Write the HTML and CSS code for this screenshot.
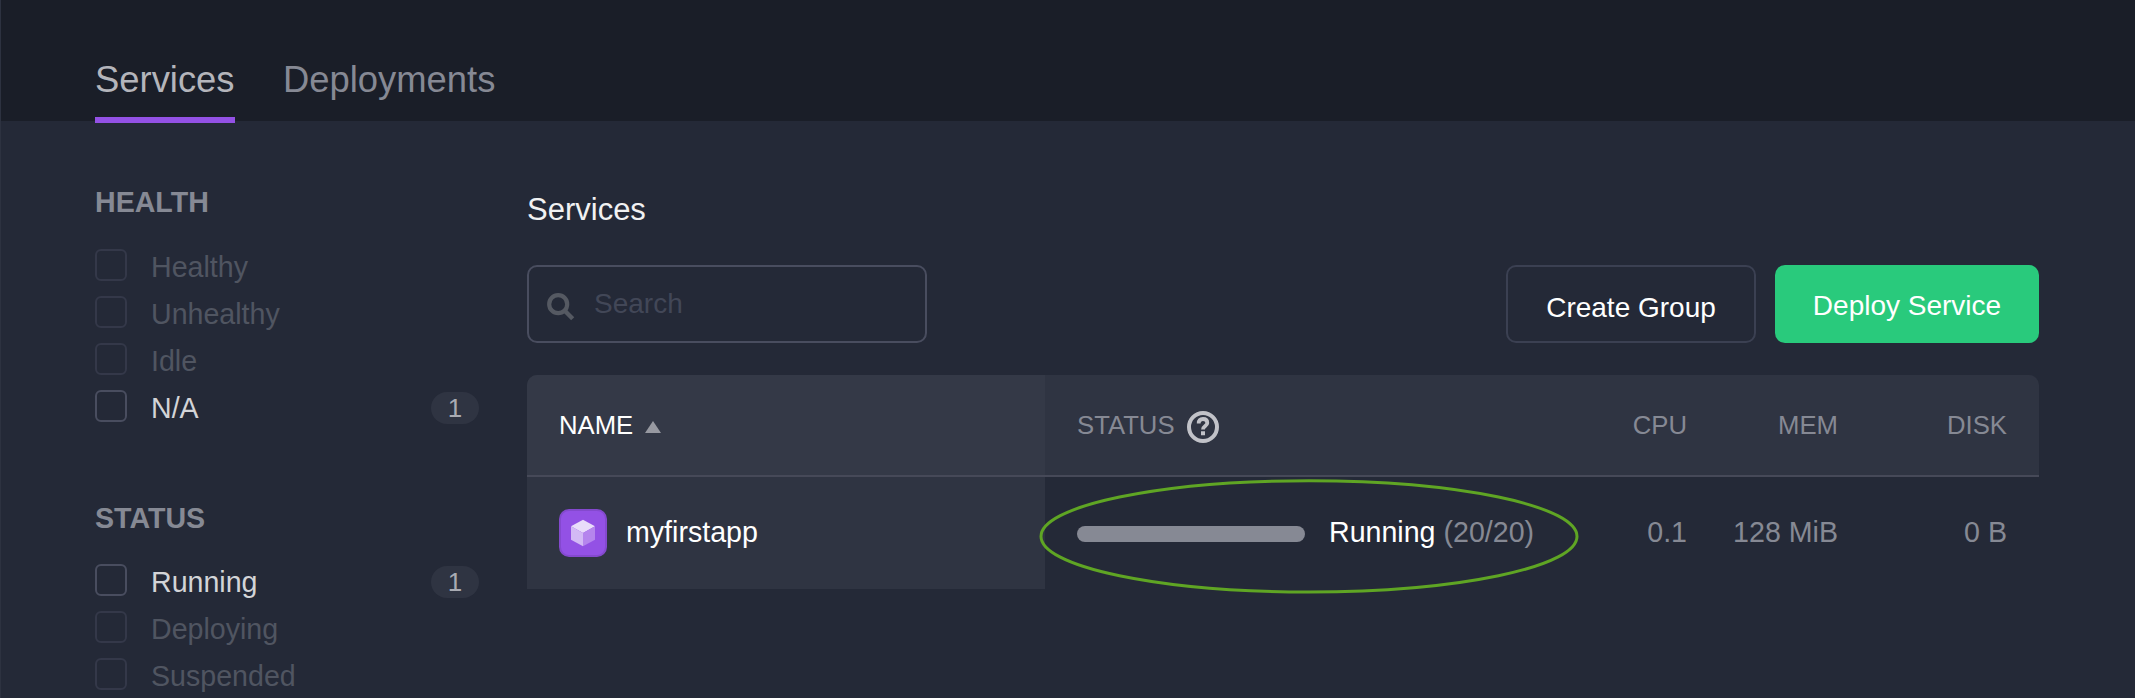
FILE: index.html
```html
<!DOCTYPE html>
<html lang="en">
<head>
<meta charset="utf-8">
<title>Services</title>
<link rel="stylesheet" href="styles.css">
</head>
<body>
<div class="page">
  <header class="topbar">
    <nav class="tabs">
      <a class="tab active">Services</a>
      <a class="tab">Deployments</a>
    </nav>
  </header>
  <div class="content">
    <aside class="sidebar">
      <section class="filter-group">
        <h2 class="filter-title">HEALTH</h2>
        <label class="filter muted"><span class="box"></span><span class="filter-name">Healthy</span></label>
        <label class="filter muted"><span class="box"></span><span class="filter-name">Unhealthy</span></label>
        <label class="filter muted"><span class="box"></span><span class="filter-name">Idle</span></label>
        <label class="filter"><span class="box"></span><span class="filter-name">N/A</span><span class="count">1</span></label>
      </section>
      <section class="filter-group">
        <h2 class="filter-title">STATUS</h2>
        <label class="filter"><span class="box"></span><span class="filter-name">Running</span><span class="count">1</span></label>
        <label class="filter muted"><span class="box"></span><span class="filter-name">Deploying</span></label>
        <label class="filter muted"><span class="box"></span><span class="filter-name">Suspended</span></label>
      </section>
    </aside>
    <main class="main">
      <h1 class="title">Services</h1>
      <div class="toolbar">
        <div class="search">
          <svg class="search-icon" width="28" height="28" viewBox="0 0 28 28"><circle cx="11.2" cy="11.2" r="9" fill="none" stroke="#555962" stroke-width="4.2"/><path d="M17.5 17.5L25.7 25.7" stroke="#555962" stroke-width="4.4"/></svg>
          <span class="placeholder">Search</span>
        </div>
        <div class="actions">
          <button class="btn outline">Create Group</button>
          <button class="btn primary">Deploy Service</button>
        </div>
      </div>
      <div class="table">
        <div class="row head">
          <div class="cell name">NAME<svg class="caret" width="16" height="12" viewBox="0 0 16 12"><path d="M8 0L16 12H0Z" fill="#9799a1"/></svg></div>
          <div class="cell status">STATUS<svg class="help" width="32" height="32" viewBox="0 0 32 32"><circle cx="16" cy="16" r="14" fill="none" stroke="#c1c2c8" stroke-width="4"/><path d="M11.7 12.6C11.7 9.7 13.3 8 16 8s4.3 1.6 4.3 4c0 2.9-4.3 3.2-4.3 6.4" fill="none" stroke="#c1c2c8" stroke-width="3.8"/><path d="M14 20.2h4v4h-4z" fill="#c1c2c8"/></svg></div>
          <div class="cell num">CPU</div>
          <div class="cell num">MEM</div>
          <div class="cell num">DISK</div>
        </div>
        <div class="row body-row">
          <div class="cell name"><svg class="app-icon" width="48" height="48" viewBox="0 0 48 48"><rect x="1" y="1" width="46" height="46" rx="9" fill="#9351e5" stroke="#8449ce" stroke-width="2"/><path d="M24 10.7L36 17.3 24 24 12 17.3Z" fill="#e9dcfa"/><path d="M12 17.3L24 24V37.3L12 30.7Z" fill="#d3b9f5"/><path d="M36 17.3L24 24V37.3L36 30.7Z" fill="#b585ed"/></svg><span class="app-name">myfirstapp</span></div>
          <div class="cell status">
            <span class="progress"></span><span class="state">Running <span class="dim">(20/20)</span></span>
            <svg class="highlight" width="540" height="116" viewBox="0 0 540 116"><ellipse cx="270" cy="58.4" rx="268" ry="55.6" fill="none" stroke="#5fa524" stroke-width="3"/></svg>
          </div>
          <div class="cell num">0.1</div>
          <div class="cell num">128 MiB</div>
          <div class="cell num">0 B</div>
        </div>
      </div>
    </main>
  </div>
</div>
</body>
</html>
```
FILE: styles.css
```css
* { box-sizing: border-box; }
body {
  margin: 0;
  background: #242937;
  font-family: "Liberation Sans", Arial, sans-serif;
  font-size: 28.6px;
  color: #fff;
}
.page {
  height: 698px;
  overflow: hidden;
  border-left: 1px solid #2d3240;
}
.topbar {
  height: 121px;
  padding: 59px 0 0 94px;
  background: #1a1e28;
}
.tabs { display: flex; gap: 48px; }
.tab {
  height: 64px;
  font-size: 36.4px;
  line-height: 42px;
  color: #868994;
}
.tab.active { width: 140px; color: #b4b5bb; border-bottom: 6px solid #9351e5; }
.content { display: flex; padding: 62px 96px 0 94px; }
.sidebar { width: 384px; margin-right: 48px; flex: none; }
.filter-group { height: 316px; }
.filter-title {
  margin: 0 0 23px;
  padding-top: 3px;
  font-size: 28.6px;
  line-height: 32px;
  font-weight: bold;
  color: #868994;
}
.filter-group + .filter-group .filter-title { margin-bottom: 22px; }
.filter { display: flex; align-items: center; height: 47px; color: #d3d4d7; }
.box {
  width: 32px;
  height: 32px;
  margin-right: 24px;
  border: 2px solid #494d5f;
  border-radius: 6px;
}
.filter-name { flex: 1; padding-top: 4px; line-height: 32px; }
.filter.muted { color: #505561; }
.muted .box { border-color: #343849; }
.count {
  width: 48px;
  height: 32px;
  margin-top: 4px;
  border-radius: 16px;
  background: #2f3442;
  font-size: 26px;
  line-height: 33px;
  text-align: center;
  color: #a9abb3;
}
.main { flex: 1; }
.title {
  margin: 0;
  padding-top: 9px;
  height: 82px;
  font-size: 31px;
  line-height: 36px;
  font-weight: normal;
  color: #f1f1f2;
}
.toolbar { display: flex; justify-content: space-between; height: 78px; }
.search {
  display: flex;
  width: 400px;
  padding: 0 18px;
  align-items: center;
  border: 2px solid #494d5f;
  border-radius: 10px;
}
.search-icon { margin-top: 5px; }
.placeholder { margin-left: 19px; font-size: 28px; color: #424757; }
.actions { display: flex; gap: 19px; }
.btn {
  height: 78px;
  padding: 0;
  border: 0;
  border-radius: 10px;
  font: 28px/32px "Liberation Sans", Arial, sans-serif;
  color: #fff;
}
.btn.outline { width: 250px; padding-top: 8px; border: 2px solid #3b4052; background: none; }
.btn.primary { width: 264px; padding-top: 4px; background: #29ca7c; }
.table { margin-top: 32px; }
.row {
  display: grid;
  grid-template-columns: 518px 491px 151px 151px 201px;
  height: 112px;
}
.cell { display: flex; align-items: center; }
.name { padding-left: 32px; background: #2f3442; }
.status { position: relative; padding-left: 32px; }
.num { justify-content: flex-end; color: #868994; }
.num:last-child { padding-right: 32px; }
.head {
  height: 102px;
  border-bottom: 2px solid #464958;
  border-radius: 10px 10px 0 0;
  overflow: hidden;
  background: #2f3442;
  font-size: 25.7px;
  color: #868994;
}
.head .name { background: #343947; color: #fff; }
.caret { margin: 4px 0 0 12px; }
.help { margin: 4px 0 0 12px; }
.app-name { margin-left: 19px; }
.app-name, .state { padding-bottom: 2px; }
.body-row .num { padding-bottom: 2px; }
.progress {
  width: 228px;
  height: 16px;
  margin: 2px 24px 0 0;
  border-radius: 8px;
  background: #868994;
}
.dim { color: #868994; }
.highlight { position: absolute; left: -6px; top: 1px; z-index: 1; }
```
